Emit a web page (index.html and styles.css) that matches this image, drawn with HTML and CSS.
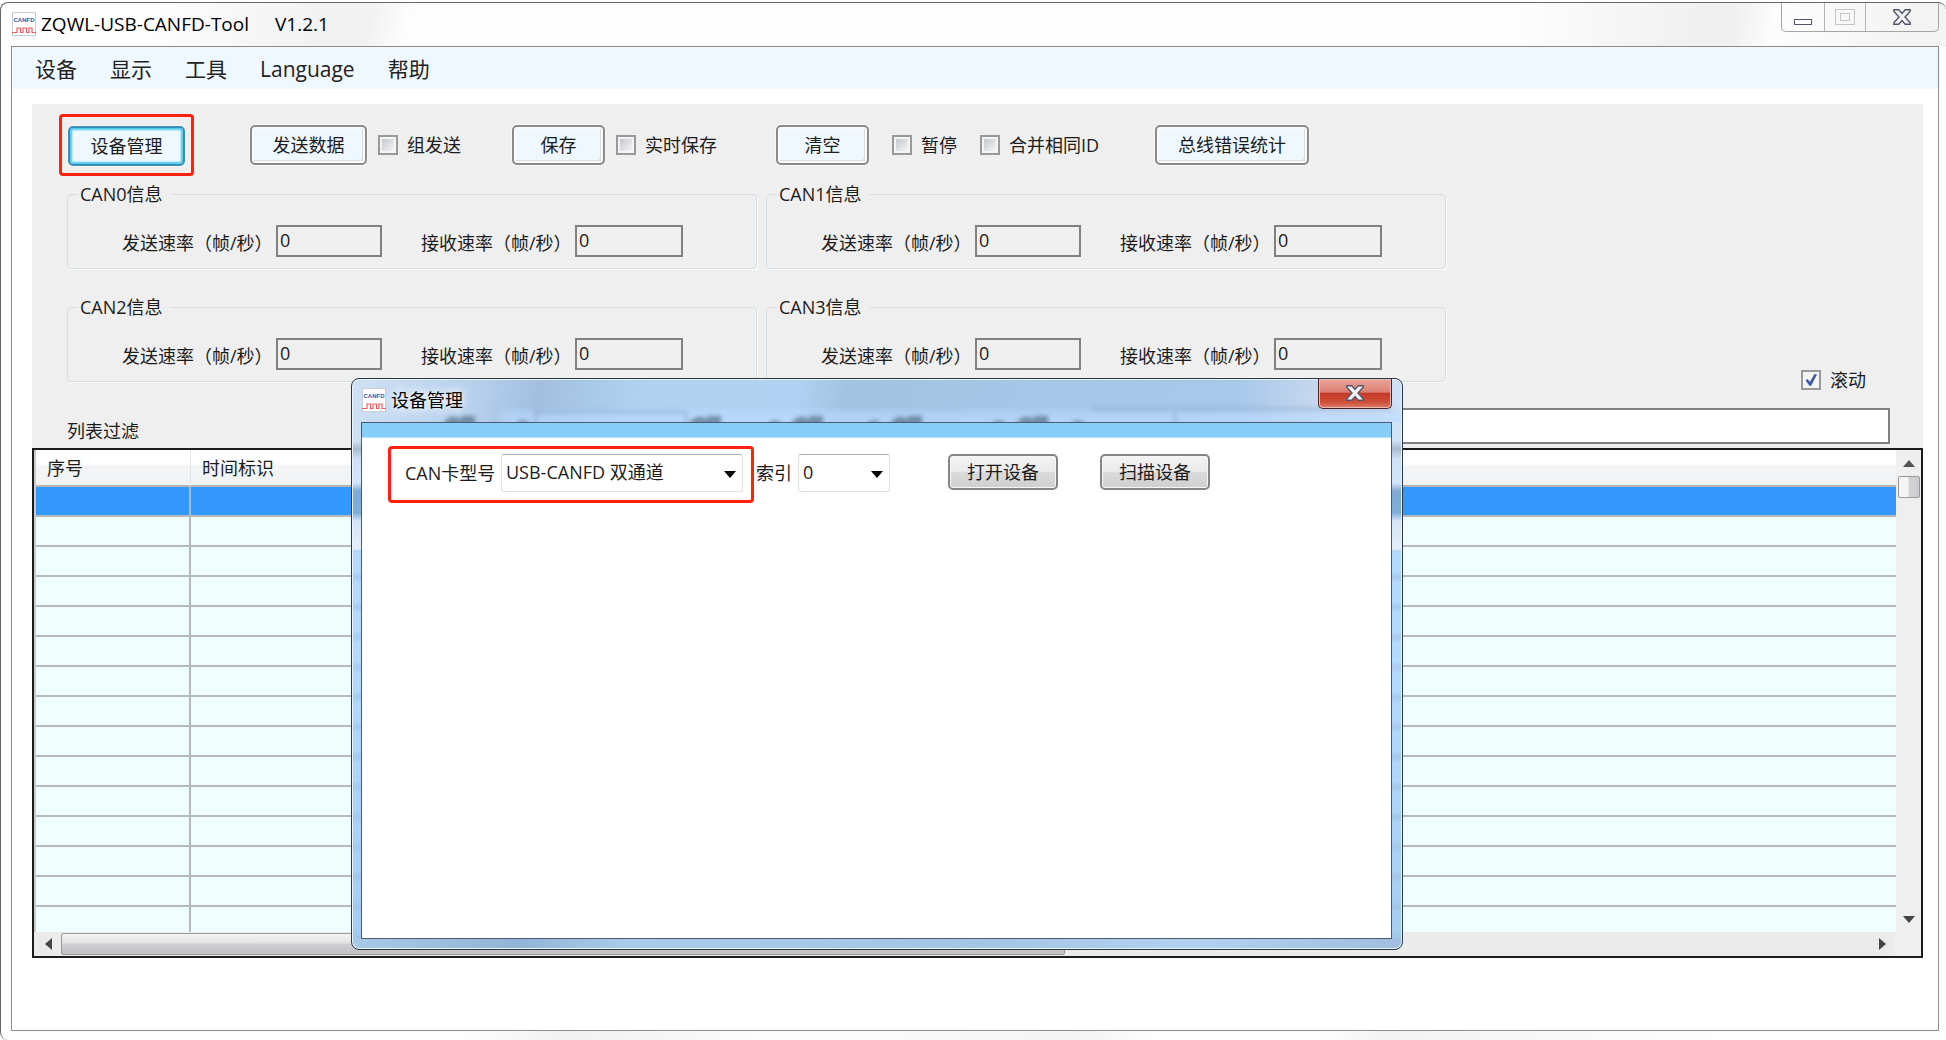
FILE: index.html
```html
<!DOCTYPE html>
<html lang="zh-CN">
<head>
<meta charset="utf-8">
<title>ZQWL-USB-CANFD-Tool</title>
<link rel="stylesheet" href="styles.css">
</head>
<body>
<div class="window">
  <header class="titlebar">
    <svg class="logo" viewBox="0 0 24 24" aria-hidden="true">
      <rect x=".5" y=".5" width="23" height="23" fill="#fff" stroke="#c9cdd2"/>
      <text x="12" y="10" text-anchor="middle" class="logo-text">CANFD</text>
      <path d="M0 20.500h5v-4.500h3.500v4.500h2.500v-4.500h3.500v4.500h2.500v-4.500h3v4.500h4" fill="none" stroke="#ec5a62" stroke-width="1.200"/>
    </svg>
    <h1 class="title">ZQWL-USB-CANFD-Tool</h1>
    <span class="version">V1.2.1</span>
    <div class="caption-buttons">
      <button type="button" class="cap-min" aria-label="最小化"><svg width="18" height="6"><rect x=".5" y=".5" width="17" height="5" fill="#fff" stroke="#53566b"/></svg></button>
      <button type="button" class="cap-max" aria-label="最大化" disabled><svg width="20" height="16"><rect x=".5" y=".5" width="19" height="15" fill="none" stroke="#c4c4c4"/><rect x="5.500" y="4.500" width="9" height="7" fill="none" stroke="#c4c4c4"/></svg></button>
      <button type="button" class="cap-close" aria-label="关闭"><svg width="18" height="16"><path d="M.8.8h5L9 4.500 12.200.8h5v1.500L12 8l5.200 5.700v1.500h-5L9 11.500l-3.200 3.700h-5v-1.500L6 8 .8 2.300z" fill="#f2f2f4" stroke="#53566b" stroke-width="1.400"/></svg></button>
    </div>
  </header>

  <div class="client">
    <nav class="menu">
      <a href="#">设备</a><a href="#">显示</a><a href="#">工具</a><a href="#">Language</a><a href="#">帮助</a>
    </nav>

    <main class="content">
      <section class="panel">
        <div class="toolbar">
          <div class="tool-group"><span class="callout"><button type="button" class="btn active">设备管理</button></span></div>
          <div class="tool-group">
            <button type="button" class="btn">发送数据</button>
            <label class="check"><input type="checkbox">组发送</label>
          </div>
          <div class="tool-group">
            <button type="button" class="btn small">保存</button>
            <label class="check"><input type="checkbox">实时保存</label>
          </div>
          <div class="tool-group spaced">
            <button type="button" class="btn small">清空</button>
            <label class="check"><input type="checkbox">暂停</label>
            <label class="check"><input type="checkbox">合并相同ID</label>
          </div>
          <div class="tool-group"><button type="button" class="btn wide">总线错误统计</button></div>
        </div>

        <div class="channels">
          <fieldset class="channel"><legend>CAN0信息</legend>
            <label for="tx0">发送速率（帧/秒）</label><input id="tx0" value="0" readonly>
            <label for="rx0">接收速率（帧/秒）</label><input id="rx0" value="0" readonly>
          </fieldset>
          <fieldset class="channel"><legend>CAN1信息</legend>
            <label for="tx1">发送速率（帧/秒）</label><input id="tx1" value="0" readonly>
            <label for="rx1">接收速率（帧/秒）</label><input id="rx1" value="0" readonly>
          </fieldset>
          <fieldset class="channel row-start"><legend>CAN2信息</legend>
            <label for="tx2">发送速率（帧/秒）</label><input id="tx2" value="0" readonly>
            <label for="rx2">接收速率（帧/秒）</label><input id="rx2" value="0" readonly>
          </fieldset>
          <fieldset class="channel"><legend>CAN3信息</legend>
            <label for="tx3">发送速率（帧/秒）</label><input id="tx3" value="0" readonly>
            <label for="rx3">接收速率（帧/秒）</label><input id="rx3" value="0" readonly>
          </fieldset>
          <label class="check scroll-check"><input type="checkbox" checked>滚动</label>
        </div>

        <div class="filter">
          <label for="filter">列表过滤</label>
          <input id="filter" type="text">
        </div>
      </section>

      <section class="grid-box">
        <div class="grid-view">
          <table class="grid">
            <thead><tr><th class="col-no">序号</th><th class="col-time">时间标识</th><th></th></tr></thead>
            <tbody>
              <tr class="selected"><td></td><td></td><td></td></tr>
              <tr><td></td><td></td><td></td></tr>
              <tr><td></td><td></td><td></td></tr>
              <tr><td></td><td></td><td></td></tr>
              <tr><td></td><td></td><td></td></tr>
              <tr><td></td><td></td><td></td></tr>
              <tr><td></td><td></td><td></td></tr>
              <tr><td></td><td></td><td></td></tr>
              <tr><td></td><td></td><td></td></tr>
              <tr><td></td><td></td><td></td></tr>
              <tr><td></td><td></td><td></td></tr>
              <tr><td></td><td></td><td></td></tr>
              <tr><td></td><td></td><td></td></tr>
              <tr><td></td><td></td><td></td></tr>
              <tr><td></td><td></td><td></td></tr>
            </tbody>
          </table>
        </div>
        <div class="vscroll">
          <button type="button" aria-label="向上"><svg width="12" height="7"><path d="M6 0l6 7H0z" fill="#555"/></svg></button>
          <div class="vthumb"></div>
          <button type="button" class="end" aria-label="向下"><svg width="12" height="7"><path d="M0 0h12L6 7z" fill="#444"/></svg></button>
        </div>
        <div class="hscroll">
          <button type="button" aria-label="向左"><svg width="7" height="12"><path d="M7 0v12L0 6z" fill="#444"/></svg></button>
          <div class="hthumb"></div>
          <button type="button" class="end" aria-label="向右"><svg width="7" height="12"><path d="M0 0v12l7-6z" fill="#444"/></svg></button>
        </div>
      </section>
    </main>
  </div>
</div>

<section class="dialog" role="dialog" aria-labelledby="dlg-title">
  <svg class="glass" aria-hidden="true">
    <rect class="haze" x="150" y="32" width="900" height="20" fill="#bbdcff"/>
    <g class="smudge">
      <path d="M184 50V33H334V50M740 30H1040M823 33V50" fill="none" stroke="#86a3c4" stroke-width="3"/>
      <g fill="#2f4458">
        <path d="M92 43l6-5h8v2h3v-3h14v9H92zM338 43l6-5h8v2h3v-3h14v9h-31zM440 43l6-5h8v2h3v-3h14v9h-31zM539 43l6-5h8v2h3v-3h14v9h-31zM665 43l6-5h8v2h3v-3h14v9h-31z"/>
        <path d="M166 42h10v4h-10zM418 42h10v4h-10zM517 42h10v4h-10zM642 42h10v4h-10zM721 42h10v4h-10z"/>
      </g>
    </g>
  </svg>
  <header class="dialog-bar">
    <svg class="logo" viewBox="0 0 24 24" aria-hidden="true">
      <rect x=".5" y=".5" width="23" height="23" fill="#fff" stroke="#c9cdd2"/>
      <text x="12" y="10" text-anchor="middle" class="logo-text">CANFD</text>
      <path d="M0 20.500h5v-4.500h3.500v4.500h2.500v-4.500h3.500v4.500h2.500v-4.500h3v4.500h4" fill="none" stroke="#ec5a62" stroke-width="1.200"/>
    </svg>
    <h2 id="dlg-title">设备管理</h2>
    <button type="button" class="dialog-close" aria-label="关闭"><svg width="18" height="16"><path d="M.8.8h5L9 4.500 12.200.8h5v1.500L12 8l5.200 5.700v1.500h-5L9 11.500l-3.200 3.700h-5v-1.500L6 8 .8 2.300z" fill="#f2f2f4" stroke="#53566b" stroke-width="1.400"/></svg></button>
  </header>
  <div class="dialog-body">
    <form class="device-form">
      <div class="callout model">
        <label for="model">CAN卡型号</label>
        <span class="combo combo-wide"><select id="model"><option>USB-CANFD 双通道</option></select><svg width="12" height="7"><path d="M0 0h12L6 7z"/></svg></span>
      </div>
      <label for="index">索引</label>
      <span class="combo"><select id="index"><option>0</option></select><svg width="12" height="7"><path d="M0 0h12L6 7z"/></svg></span>
      <button type="button" class="btn-classic open">打开设备</button>
      <button type="button" class="btn-classic">扫描设备</button>
    </form>
  </div>
</section>
</body>
</html>
```
FILE: styles.css
```css
* { box-sizing: border-box; }
html, body { height: 100%; }
body {
  margin: 0;
  padding-top: 2px;
  background: #fff;
  color: #1c1c1c;
  font: 18px/24px "Open Sans", "Noto Sans CJK SC", sans-serif;
  position: relative;
  overflow: hidden;
}
button, input, select { font: inherit; color: inherit; margin: 0; padding: 0; }
svg { display: block; }
.logo-text { font: bold 6px "Liberation Sans", sans-serif; fill: #2a5caa; }
.logo { width: 24px; height: 24px; flex: none; }

/* main window frame */
.window {
  height: 100%;
  display: flex;
  flex-direction: column;
  padding: 0 7px 9px 10px;
  border: solid #666;
  border-width: 1px 0 0 1px;
  border-radius: 8px 8px 0 8px;
  background:
    linear-gradient(100deg, transparent 8%, #f1f1f1 17%, #f1f1f1 19%, transparent 21%, transparent 78%, #f0f0f0 87%, #f0f0f0 89%, transparent 91%, #f3f3f3 98%) 0 0 / 100% 44px no-repeat,
    linear-gradient(100deg, transparent 24%, #f1f1f1 29%, #f8f8f8 36%, transparent 40%, #f4f4f4 56%, transparent 59%, transparent 68%, #f3f3f3 71%, transparent 88%) 0 100% / 100% 9px no-repeat,
    #fdfdfd;
}
.titlebar { display: flex; flex: none; height: 43px; align-items: flex-start; }
.titlebar .logo { margin: 9px 5px 0 1px; }
.title, .version { margin: 9px 0 0; font-size: 19px; font-weight: 400; color: #000; }
.version { margin-left: 26px; }
.caption-buttons {
  display: flex;
  margin-left: auto;
  height: 29px;
  border: 1px solid #a5a5a5;
  border-top: 0;
  border-radius: 0 0 5px 5px;
}
.caption-buttons button {
  display: flex;
  justify-content: center;
  border: 0;
  border-left: 1px solid #b5b5b5;
  background: none;
}
.caption-buttons button:first-child { border-left: 0; }
.cap-min { width: 42px; padding-top: 16px; }
.cap-max { width: 41px; padding-top: 6px; }
.cap-close { width: 73px; padding-top: 6px; }

.client {
  flex: 1;
  min-height: 0;
  display: flex;
  flex-direction: column;
  border: 1px solid #8c8c8c;
  background: #fff;
}
.menu {
  display: flex;
  gap: 33px;
  height: 42px;
  flex: none;
  align-items: center;
  padding: 2px 23px 0;
  background: #eff7ff;
  font-size: 21px;
}
.menu a { color: #222; text-decoration: none; }
.content {
  flex: 1;
  min-height: 0;
  display: flex;
  flex-direction: column;
  margin: 15px 15px 72px 20px;
}

/* control panel */
.panel { background: #efefef; padding: 10px 33px 4px 27px; }
.toolbar { display: grid; grid-template-columns: 191px 262px 264px 379px 1fr; align-items: center; }
.tool-group { display: flex; align-items: center; gap: 11px; }
.tool-group.spaced { gap: 23px; }
.callout { border: 3px solid #ff2010; border-radius: 4px; }
.toolbar .callout { width: 135px; height: 62px; padding: 9px 6px; }
.btn {
  width: 117px;
  height: 40px;
  border: 2px solid #8a8a8a;
  border-radius: 5px;
  background: #eff7ff;
  box-shadow: 0 0 0 1px #f8f8f8, inset 0 0 0 2px #fafafa, inset -3px -3px 0 #dcdcdc;
}
.btn.active { border-color: #3a8fb7; box-shadow: 0 0 0 1px #f8f8f8, inset 0 0 2px 2px #4cc8ee; }
.btn.small { width: 93px; }
.btn.wide { width: 154px; }
.check { display: flex; align-items: center; gap: 9px; white-space: nowrap; }
.check input {
  appearance: none;
  width: 20px;
  height: 20px;
  border: 2px solid #999;
  background: #f4f4f4;
  padding: 2px;
}
.check input::before {
  content: "";
  display: block;
  width: 12px;
  height: 12px;
  background: linear-gradient(135deg, #c3c7cd, #f5f5f5);
}
.check input:checked::before {
  background: #3f5ba5;
  clip-path: polygon(5% 55%, 20% 42%, 42% 65%, 78% 0, 100% 5%, 50% 100%, 35% 95%);
}

.channels { display: grid; grid-template-columns: 690px 680px 1fr; gap: 26px 9px; margin: 6px 0 26px 8px; }
.channel {
  display: flex;
  margin: 0;
  min-width: 0;
  height: 87px;
  padding: 19px 0 0 54px;
  border: 1px solid #d3dfe6;
  border-radius: 4px;
  box-shadow: 1px 1px 0 #fcfcfc;
  align-items: flex-start;
}
.channel.row-start { grid-column: 1; }
.channel legend { margin-left: -44px; padding: 0 8px 0 2px; background: #efefef; }
.channel label { padding-top: 6px; width: 154px; white-space: nowrap; }
.channel input {
  width: 106px;
  height: 32px;
  border: 2px solid #808080;
  background: #efefef;
  padding: 0 2px 3px;
}
.channel input + label { margin-left: 39px; }
.channel label + input:last-child { width: 108px; }
.scroll-check { justify-self: end; align-self: end; margin: 0 24px -10px 0; }

.filter { display: grid; grid-template-columns: 1106px 1fr; align-items: center; padding-left: 8px; }
.filter label { padding-top: 10px; }
.filter input { width: 100%; height: 36px; border: 2px solid #808080; background: #fff; }

/* message list */
.grid-box {
  flex: 1;
  min-height: 0;
  display: grid;
  grid-template: 1fr 24px / 1fr 25px;
  border: 2px solid #1c1c1c;
  background: #efefef;
}
.grid-view { overflow: hidden; background: #efffff; border-left: 2px solid #ccc; }
.grid { width: 100%; border-collapse: separate; border-spacing: 0; table-layout: fixed; }
.col-no { width: 155px; }
.col-time { width: 300px; }
.grid th {
  height: 37px;
  padding: 0 11px;
  text-align: left;
  font-weight: 400;
  background: linear-gradient(#fff 40%, #f3f4f6 45%, #f1f2f4);
  border-right: 1px solid #e2e4e6;
  border-bottom: 2px solid #b5b5b5;
}
.grid td { height: 30px; padding: 0; border-right: 2px solid #b5b9b9; border-bottom: 2px solid #b5b9b9; }
.grid th:last-child, .grid td:last-child { border-right: 0; }
.grid .selected td { background: #3399ff; }
.vscroll, .hscroll { display: flex; align-items: center; }
.vscroll { flex-direction: column; }
.hscroll { margin-right: 1px; padding-left: 2px; background: #ebebeb; }
.vscroll button, .hscroll button {
  display: flex;
  align-items: center;
  justify-content: center;
  border: 0;
  background: none;
  width: 25px;
  height: 26px;
}
.vscroll .end, .vscroll .vthumb { flex: none; }
.vscroll .end { margin-top: auto; }
.vthumb { width: 22px; height: 22px; border: 1px solid #999; border-radius: 2px; background: linear-gradient(90deg, #f5f5f5 45%, #d4d4d8 50%, #cacace); }
.hscroll .end { margin-left: auto; }
.hthumb { width: 54%; height: 22px; border: 1px solid #999; border-radius: 2px; background: linear-gradient(#f3f3f3, #e2e2e3 45%, #d0d0d3 50%, #c0c0c4); }

/* device dialog, floating over the main window */
.dialog {
  position: absolute;
  left: 351px;
  top: 378px;
  width: 1052px;
  height: 572px;
  display: flex;
  flex-direction: column;
  padding: 0 10px 10px 9px;
  border: 1px solid #2b3848;
  border-radius: 8px;
  overflow: hidden;
  box-shadow: inset 0 0 0 1px #e8f3ff;
  background:
    linear-gradient(100deg, #cfe1f5, #b6d0ec 12%, #a2bfe0 18%, #b3d2f1 28%, #b1d2f2 42%, #a3c3e2 47%, #a6c7e8 70%, #a8c8ea 84%, #c8d9ef 92%, #cfe1f7) 0 0 / 100% 44px no-repeat,
    linear-gradient(90deg, #a9c9e8, #93b4d8 16%, #a9cbea 26%, #a5c5e5 60%, #b2d1ef 80%, #a0bfe0) 0 100% / 100% 11px no-repeat,
    linear-gradient(#cfe1f5 62px, #a8bccf 70px, #cfe1f7 80px, #d2e5fa 104px, #7ea9d5 112px, #82add8 134px, #d3e6f8 142px, #e3eefa 170px, transparent 172px),
    repeating-linear-gradient(transparent 0 12px, #9cc0e299 18px, transparent 24px 30px),
    linear-gradient(#b3dbff 50%, #a4cdf0);
}
.glass { position: absolute; left: 0; top: 0; width: 100%; height: 43px; }
.haze { filter: blur(3px); opacity: .6; }
.smudge { filter: blur(2px); opacity: .5; }
.dialog-bar { display: flex; position: relative; height: 43px; flex: none; }
.dialog-bar .logo { margin: 9px 5px 0 1px; }
.dialog-bar h2 { margin: 9px 0 0; font-size: 18px; font-weight: 400; color: #000; text-shadow: 0 0 8px #fff, 0 0 12px #fff; }
.dialog-close {
  display: flex;
  justify-content: center;
  width: 74px;
  height: 30px;
  margin-left: auto;
  padding-top: 6px;
  border: 1px solid #4b2028;
  border-top: 0;
  border-radius: 0 0 5px 5px;
  background: linear-gradient(#e9a49a, #dd8075 45%, #c43a26 50%, #cf5038 80%, #dc8270);
  box-shadow: inset 0 0 0 1px #f0b9b0;
}
.dialog-body { position: relative; flex: 1; border: 1px solid #4c5b6b; background: #fff; }
.dialog-body::before { content: ""; display: block; height: 14px; background: #87cefa; border-bottom: 1px solid #b5e0fb; }
.device-form { display: flex; align-items: flex-start; padding: 8px 26px; line-height: 22px; }
.model { display: flex; align-items: flex-start; height: 57px; width: 366px; padding: 5px 0 0 14px; margin-right: 2px; }
.model label { width: 96px; padding-top: 8px; white-space: nowrap; }
.device-form > label { width: 42px; padding-top: 16px; }
.combo { position: relative; width: 92px; }
.device-form > .combo, .btn-classic { margin-top: 8px; }
.combo-wide { width: 242px; }
.combo select {
  display: block;
  appearance: none;
  width: 100%;
  height: 38px;
  padding: 0 4px 3px;
  border: 1px solid #dde1e9;
  border-top-color: #aaadb5;
  border-radius: 3px;
  background: #fff;
}
.combo svg { position: absolute; right: 7px; top: 17px; pointer-events: none; }
.btn-classic {
  width: 110px;
  height: 36px;
  border: 2px solid #858585;
  border-radius: 5px;
  background: linear-gradient(#f3f3f3, #eaeaea 48%, #dadada 52%, #cfcfcf);
  box-shadow: inset 0 0 0 1px #f6f6f6;
}
.btn-classic.open { margin-left: 58px; margin-right: 42px; }
```
